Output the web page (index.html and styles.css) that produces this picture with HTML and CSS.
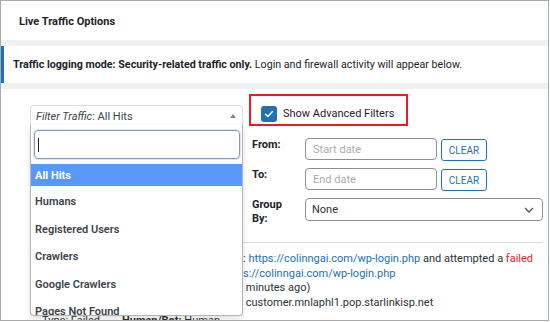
FILE: index.html
```html
<!DOCTYPE html>
<html lang="en">
<head>
  <meta charset="UTF-8" />
  <title>Live Traffic Options</title>
  <link rel="stylesheet" href="styles.css">
</head>
<body>
  <div class="panel">
    <div class="panel-head">Live Traffic Options</div>

    <div class="notice">
      <strong>Traffic logging mode: Security-related traffic only.</strong>&nbsp;Login and firewall activity will appear below.
    </div>

    <div class="panel-body">
      <div class="filters">
        <div class="filter-col">
          <div class="picker">
            <div class="picker-choice">
              <span><em>Filter Traffic</em>: All Hits</span>
              <span class="caret-up"></span>
            </div>

            <div class="picker-drop">
              <div class="picker-search">
                <div class="search-box"><span class="cursor"></span></div>
              </div>
              <ul class="picker-results">
                <li class="active">All Hits</li>
                <li>Humans</li>
                <li>Registered Users</li>
                <li>Crawlers</li>
                <li>Google Crawlers</li>
                <li>Pages Not Found</li>
              </ul>
            </div>
          </div>
        </div>

        <div class="adv-col">
          <div class="adv-toggle">
            <span class="checkbox">
              <svg width="10" height="8" viewBox="0 0 10 8"><path d="M1.5 4.2 L3.9 6.4 L8.5 1.6" fill="none" stroke="#fff" stroke-width="1.5" stroke-linecap="round" stroke-linejoin="round"/></svg>
            </span>
            <span>Show Advanced Filters</span>
          </div>

          <div class="adv-grid">
            <div class="adv-label">From:</div>
            <div class="text-input placeholder">Start date</div>
            <button class="clear-btn">CLEAR</button>

            <div class="adv-label">To:</div>
            <div class="text-input placeholder">End date</div>
            <button class="clear-btn">CLEAR</button>

            <div class="adv-label">Group By:</div>
            <div class="group-select">
              <span>None</span>
              <svg width="10" height="6" viewBox="0 0 10 6"><path d="M1 1 L5 5 L9 1" fill="none" stroke="#50575e" stroke-width="1.3"/></svg>
            </div>
          </div>
        </div>
      </div>

      <div class="entry">
        <div class="entry-lines">
          <div>: <a href="#">https://colinngai.com/wp-login.php</a> and attempted a <span class="failed">failed</span></div>
          <div><a href="#">s://colinngai.com/wp-login.php</a></div>
          <div>&nbsp;minutes ago)</div>
          <div>&nbsp;customer.mnlaphl1.pop.starlinkisp.net</div>
        </div>
        <div class="entry-meta">
          <span class="meta-type">Type: Failed</span>
          <span><strong>Human/Bot:</strong> Human</span>
        </div>
      </div>
    </div>
  </div>
</body>
</html>
```

FILE: styles.css
```css
* {
  box-sizing: border-box;
}

html, body {
  margin: 0;
  padding: 0;
  background: #fff;
  font-family: Roboto, 'Liberation Sans', sans-serif;
  font-size: 11px;
  color: #1d2327;
}

.panel {
  width: 549px;
  height: 321px;
  border: 1px solid #a7aaad;
  background: #f0f0f1;
  overflow: hidden;
  display: flex;
  flex-direction: column;
}

.panel-head {
  height: 39px;
  flex-shrink: 0;
  display: flex;
  align-items: center;
  padding: 2px 0 0 18px;
  background: #fff;
  font-weight: 700;
}

.notice {
  height: 37px;
  flex-shrink: 0;
  margin: 6px 0 0 -1px;
  padding-left: 9px;
  display: flex;
  align-items: center;
  background: #fff;
  border-left: 4px solid #2271b1;
  white-space: nowrap;
  font-size: 10.7px;
}

.panel-body {
  flex: 1;
  min-height: 0;
  margin-top: 6px;
  background: #fff;
  padding: 5px 5px 0 29px;
}

.filters {
  display: flex;
  align-items: flex-start;
}

/* filter dropdown */
.filter-col {
  width: 213px;
  margin-top: 11px;
  flex-shrink: 0;
}

.picker {
  position: relative;
}

.picker-choice {
  height: 20px;
  display: flex;
  align-items: center;
  justify-content: space-between;
  padding: 1px 6px 0 5px;
  border: 1px solid #dcdcde;
  border-bottom: none;
  border-radius: 4px 4px 0 0;
  color: #3c434a;
}

.caret-up {
  width: 0;
  height: 0;
  border-left: 3.5px solid transparent;
  border-right: 3.5px solid transparent;
  border-bottom: 4px solid #888;
}

.picker-drop {
  position: absolute;
  top: 100%;
  left: 0;
  width: 213px;
  height: 191px;
  background: #fff;
  border: 1px solid #b4b4b4;
  border-top: none;
  border-radius: 0 0 4px 4px;
  box-shadow: 0 3px 6px rgba(0, 0, 0, 0.12);
  z-index: 10;
  overflow: hidden;
}

.picker-search {
  padding: 5px 2px 5px 3px;
}

.search-box {
  height: 29px;
  border: 1px solid #7f9bbd;
  border-radius: 4px;
  display: flex;
  align-items: center;
  padding-left: 3px;
  box-shadow: 0 0 0 1px rgba(127, 155, 189, 0.25);
}

.cursor {
  width: 1px;
  height: 14px;
  background: #222;
}

.picker-results {
  list-style: none;
  margin: 0;
  padding: 0;
}

.picker-results li {
  height: 27.5px;
  display: flex;
  align-items: center;
  padding-left: 4px;
  font-weight: 600;
  color: #3c434a;
}

.picker-results li.active {
  height: 22px;
  margin-bottom: 2px;
  background: #5897fb;
  color: #fff;
  font-weight: 700;
}

/* advanced filters */
.adv-col {
  margin-left: 6px;
  flex: 1;
}

.adv-toggle {
  width: 159px;
  height: 32px;
  border: 2px solid #e31e24;
  display: flex;
  align-items: flex-start;
  gap: 6px;
  padding: 10px 0 0 10px;
  line-height: 16px;
}

.checkbox {
  width: 16px;
  height: 16px;
  border-radius: 3px;
  background: #2271b1;
  display: flex;
  align-items: center;
  justify-content: center;
}

.adv-grid {
  margin-top: 12px;
  display: grid;
  grid-template-columns: 52px 132px 1fr;
  grid-template-rows: 22px 22px 23px;
  column-gap: 4px;
  row-gap: 8px;
  align-items: start;
}

.adv-label {
  padding: 0 10px 0 3px;
  font-weight: 700;
  line-height: 14px;
}

.text-input {
  height: 22px;
  border: 1px solid #8c8f94;
  border-radius: 4px;
  padding-left: 7px;
  display: flex;
  align-items: center;
}

.placeholder {
  color: #a7aaad;
}

.clear-btn {
  width: 46px;
  height: 22px;
  margin-top: 1px;
  padding: 0;
  background: #fff;
  border: 1px solid #2271b1;
  border-radius: 3px;
  color: #2271b1;
  font-family: Roboto, 'Liberation Sans', sans-serif;
  font-size: 10px;
}

.group-select {
  grid-column: 2 / 4;
  height: 23px;
  border: 1px solid #8c8f94;
  border-radius: 4px;
  padding: 0 8px 0 6px;
  display: flex;
  align-items: center;
  justify-content: space-between;
  color: #2c3338;
}

/* traffic entry under the dropdown */
.entry {
  margin-top: 21px;
  border-top: 1px solid #dcdcde;
  padding-top: 9px;
  line-height: 14.5px;
  color: #2c3338;
}

.entry-lines {
  padding-left: 213px;
  white-space: nowrap;
}

.entry a {
  color: #2271b1;
  text-decoration: none;
}

.failed {
  color: #e3242b;
}

.entry-meta {
  margin-top: 4px;
  padding-left: 12px;
  display: flex;
}

.meta-type {
  width: 80px;
}
```
